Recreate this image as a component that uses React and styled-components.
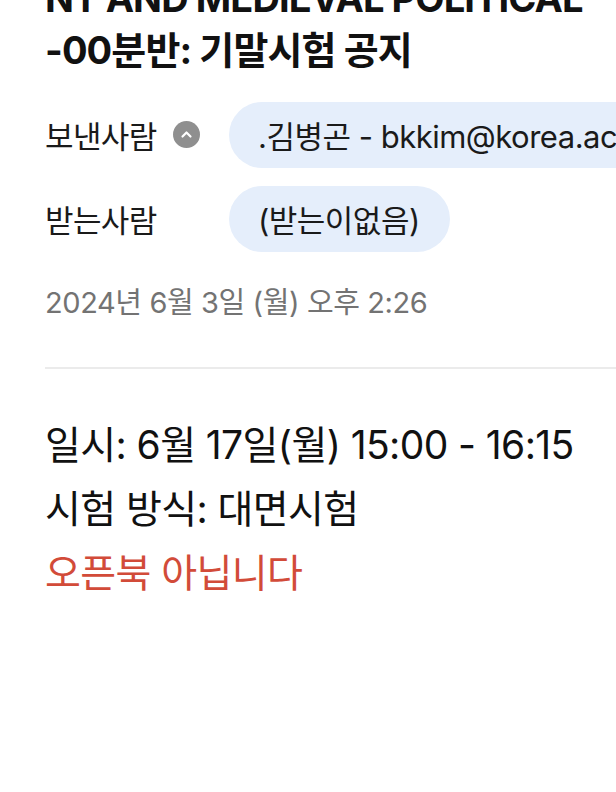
import React from 'react';
import styled, { createGlobalStyle } from 'styled-components';

const GlobalStyle = createGlobalStyle`
  html, body {
    margin: 0;
    padding: 0;
    background: #fff;
    overflow: hidden;
  }
  body {
    font-family: Inter, "Noto Sans CJK KR", sans-serif;
    color: #111;
  }
`;

const Page = styled.div`
  width: 616px;
  height: 792px;
  overflow: hidden;
  padding-left: 45px;
  box-sizing: border-box;
`;

const Title = styled.h1`
  margin: -28px 0 0;
  font-size: 38px;
  font-weight: 700;
  line-height: 52px;
  letter-spacing: -0.9px;
  color: #111;
`;

const TitleLine = styled.div`
  white-space: nowrap;
`;

const Rows = styled.div`
  display: flex;
  flex-direction: column;
  gap: 19px;
  margin-top: 26px;
`;

const Row = styled.div`
  display: flex;
  align-items: center;
  height: 65px;
`;

const Label = styled.div`
  display: flex;
  align-items: center;
  gap: 16px;
  width: 184px;
  flex-shrink: 0;
  font-size: 31px;
  color: #1a1a1a;
  letter-spacing: -0.6px;
`;

const Toggle = styled.span`
  display: inline-flex;
  align-items: center;
  justify-content: center;
  width: 27px;
  height: 27px;
  border-radius: 50%;
  background: #8f8f8f;
`;

const Pill = styled.div`
  height: 66px;
  display: flex;
  align-items: center;
  padding: 0 30px 0 29px;
  border-radius: 33px;
  background: #e5eefb;
  font-size: 31px;
  color: #1a1a1a;
  white-space: nowrap;
  flex-shrink: 0;
  letter-spacing: -0.5px;
`;

const DateLine = styled.div`
  margin-top: 28px;
  font-size: 29px;
  color: #737373;
  letter-spacing: -0.4px;
`;

const Divider = styled.hr`
  margin: 46px 0 0;
  border: 0;
  height: 2px;
  background: #ebebeb;
`;

const Body = styled.div`
  margin-top: 44px;
  display: flex;
  flex-direction: column;
`;

const Line = styled.div`
  font-size: 39px;
  line-height: 64px;
  letter-spacing: -0.6px;
  color: ${p => (p.warn ? '#d24b39' : '#111')};
`;

const ChevronUp = () => (
  <svg width="13" height="9" viewBox="0 0 13 9">
    <path d="M2.5 6.5 L6.5 2.5 L10.5 6.5" fill="none" stroke="#fff" strokeWidth="2.2" strokeLinecap="round" strokeLinejoin="round" />
  </svg>
);

export default function App() {
  return (
    <>
      <GlobalStyle />
      <Page>
        <Title>
          <TitleLine>NT AND MEDIEVAL POLITICAL</TitleLine>
          <TitleLine>-00분반: 기말시험 공지</TitleLine>
        </Title>
        <Rows>
          <Row>
            <Label>
              보낸사람
              <Toggle><ChevronUp /></Toggle>
            </Label>
            <Pill>.김병곤 - bkkim@korea.ac.kr</Pill>
          </Row>
          <Row>
            <Label>받는사람</Label>
            <Pill>(받는이없음)</Pill>
          </Row>
        </Rows>
        <DateLine>2024년 6월 3일 (월) 오후 2:26</DateLine>
        <Divider />
        <Body>
          <Line>일시: 6월 17일(월) 15:00 - 16:15</Line>
          <Line>시험 방식: 대면시험</Line>
          <Line warn>오픈북 아닙니다</Line>
        </Body>
      </Page>
    </>
  );
}
